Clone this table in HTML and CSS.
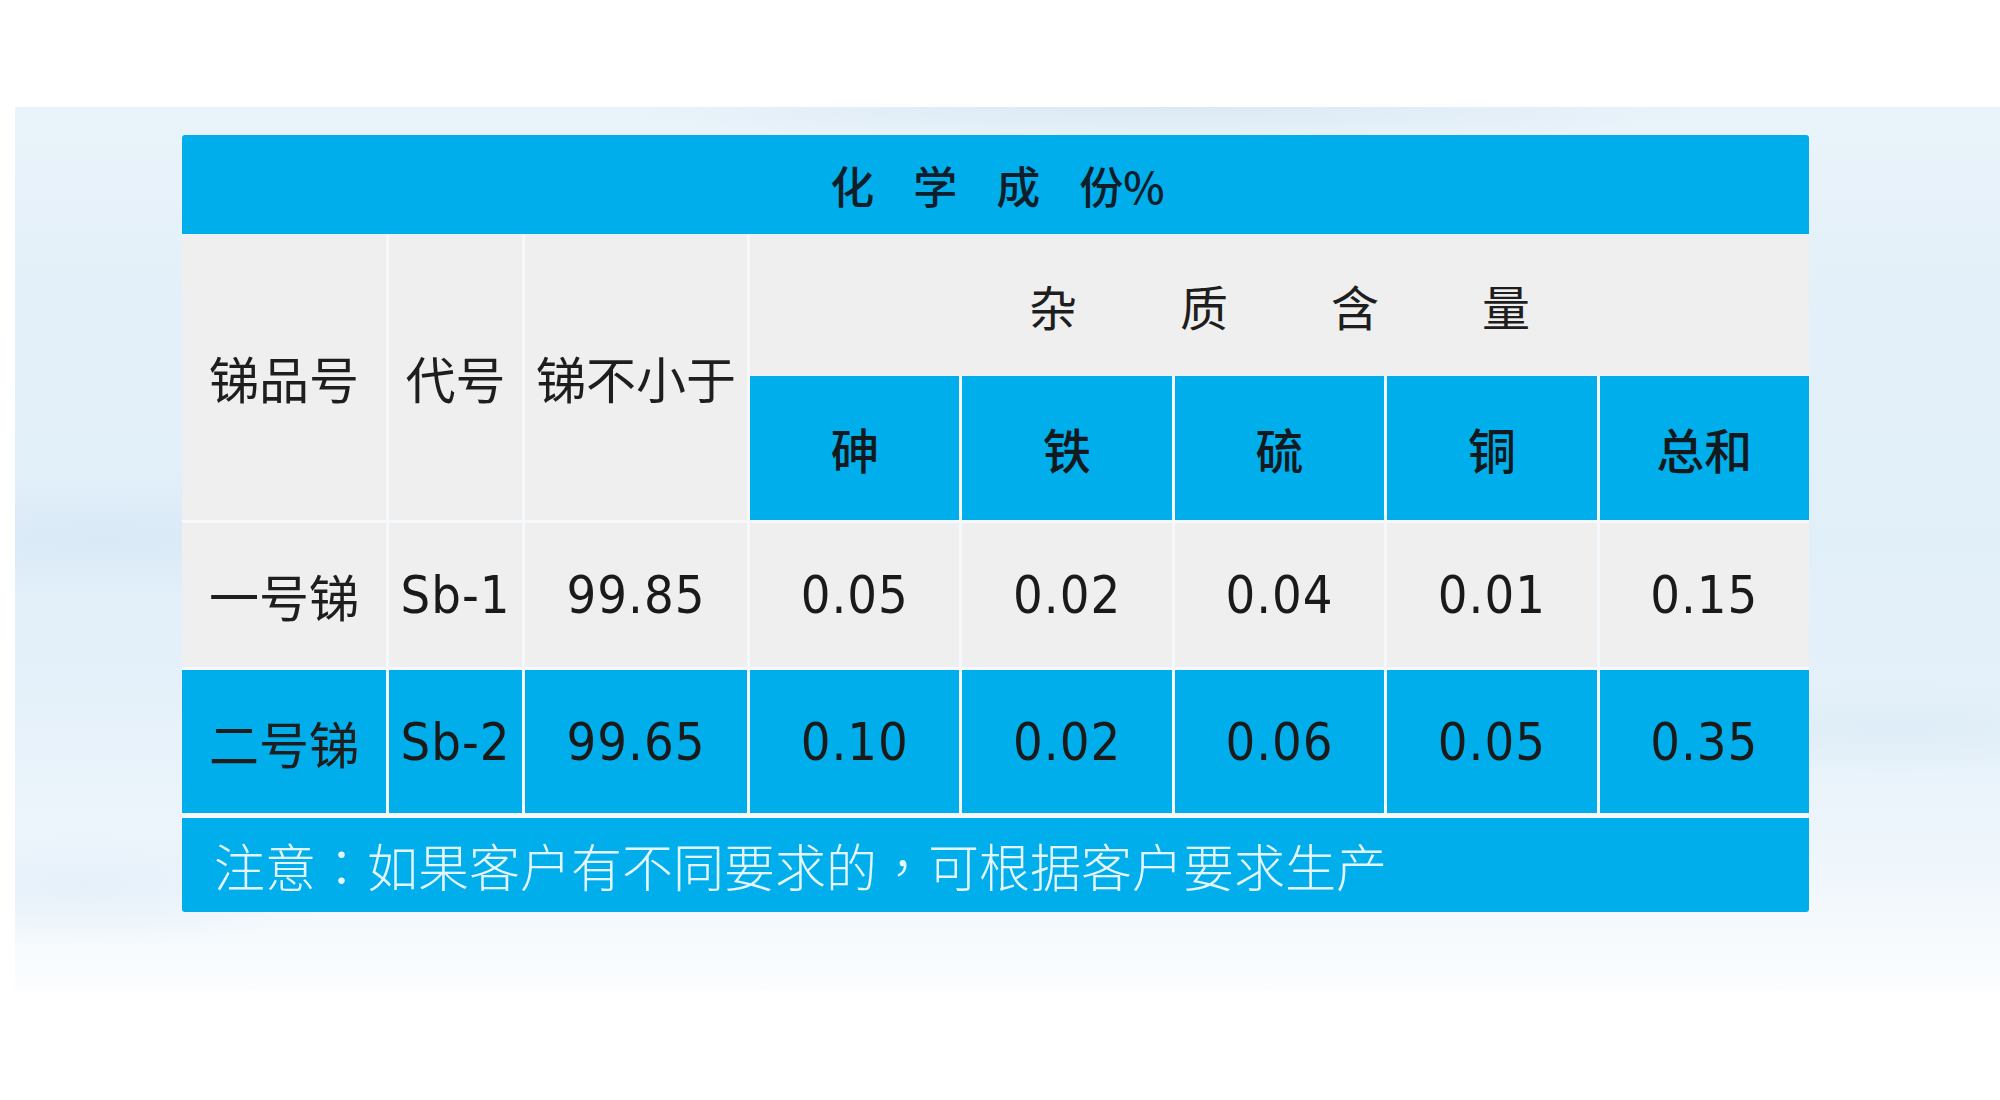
FILE: index.html
```html
<!DOCTYPE html>
<html lang="zh-CN">
<head>
<meta charset="utf-8">
<title>化学成份%</title>
<link rel="stylesheet" href="styles.css">
</head>
<body>
<div class="page">
  <div class="stage">
    <div class="table">
      <div class="cell title"><span>化</span><span>学</span><span>成</span><span>份%</span></div>

      <div class="cell grey tall cjk">锑品号</div>
      <div class="cell grey tall cjk">代号</div>
      <div class="cell grey tall cjk">锑不小于</div>
      <div class="cell grey impurity"><span>杂</span><span>质</span><span>含</span><span>量</span></div>

      <div class="cell blue cjk sub">砷</div>
      <div class="cell blue cjk sub">铁</div>
      <div class="cell blue cjk sub">硫</div>
      <div class="cell blue cjk sub">铜</div>
      <div class="cell blue cjk sub">总和</div>

      <div class="cell grey cjk">一号锑</div>
      <div class="cell grey num">Sb-1</div>
      <div class="cell grey num">99.85</div>
      <div class="cell grey num">0.05</div>
      <div class="cell grey num">0.02</div>
      <div class="cell grey num">0.04</div>
      <div class="cell grey num">0.01</div>
      <div class="cell grey num">0.15</div>

      <div class="cell blue cjk">二号锑</div>
      <div class="cell blue num">Sb-2</div>
      <div class="cell blue num">99.65</div>
      <div class="cell blue num">0.10</div>
      <div class="cell blue num">0.02</div>
      <div class="cell blue num">0.06</div>
      <div class="cell blue num">0.05</div>
      <div class="cell blue num">0.35</div>

      <div class="cell note">注意<span class="punct">：</span>如果客户有不同要求的<span class="punct">，</span>可根据客户要求生产</div>
    </div>
  </div>
</div>
</body>
</html>
```

FILE: styles.css
```css
html, body {
  margin: 0;
  padding: 0;
  background: #ffffff;
}

.page {
  width: 2000px;
  height: 1100px;
  overflow: hidden;
  background: #ffffff;
  padding-top: 107px;
  box-sizing: border-box;
}

.stage {
  margin-left: 15px;
  height: 884px;
  box-sizing: border-box;
  padding-top: 28px;
  padding-left: 167px;
  background:
    radial-gradient(ellipse 420px 70px at 1880px 620px, rgba(216,233,246,0.6), rgba(216,233,246,0) 70%),
    radial-gradient(ellipse 500px 90px at 90px 430px, rgba(214,231,246,0.7), rgba(214,231,246,0) 70%),
    radial-gradient(ellipse 380px 90px at 70px 780px, rgba(222,236,247,0.6), rgba(222,236,247,0) 70%),
    radial-gradient(ellipse 800px 50px at 1150px 0px, rgba(210,227,240,0.6), rgba(210,227,240,0) 70%),
    linear-gradient(to bottom, #e9f3fa 0%, #e3f0f9 25%, #e1eff9 50%, #e7f2fa 72%, #eff6fc 86%, #fbfdfe 100%);
}

.table {
  width: 1627px;
  display: grid;
  grid-template-columns: 204px 133px 222px repeat(5, 1fr);
  grid-template-rows: 96px 139px 144px 144px 143px 96px;
  gap: 3px;
  background: #f6f9fc;
  border-radius: 3px;
  overflow: hidden;
}

.cell {
  display: flex;
  align-items: center;
  justify-content: center;
  color: #1e1e1e;
  font-family: "Noto Sans CJK SC", "Noto Sans", sans-serif;
  font-size: 50px;
  line-height: 1;
}

.grey {
  background: #efefef;
}

.blue {
  background: #00aeeb;
}

.title {
  grid-column: 1 / -1;
  background: #00aeeb;
  margin-bottom: -3px;
  font-size: 44px;
  font-weight: 500;
  color: #0f1e2a;
  gap: 39px;
  padding-left: 4px;
}

.tall {
  grid-row: span 2;
}

.impurity {
  grid-column: span 5;
  margin-bottom: -3px;
  font-size: 48px;
  gap: 103px;
  color: #1e1e1e;
}

.sub {
  font-size: 48px;
  font-weight: 500;
  color: #121a20;
}

.num {
  font-family: "DejaVu Sans Condensed", "Noto Sans", sans-serif;
  font-size: 52px;
  letter-spacing: 1px;
  color: #1a1a1a;
}

.note {
  grid-column: 1 / -1;
  background: #00aeeb;
  margin-top: 2px;
  justify-content: flex-start;
  padding-left: 32px;
  font-size: 51px;
  font-weight: 300;
  color: #e4f5fd;
}

.punct {
  font-family: "Noto Sans CJK TC", "Noto Sans CJK SC", sans-serif;
}
```
